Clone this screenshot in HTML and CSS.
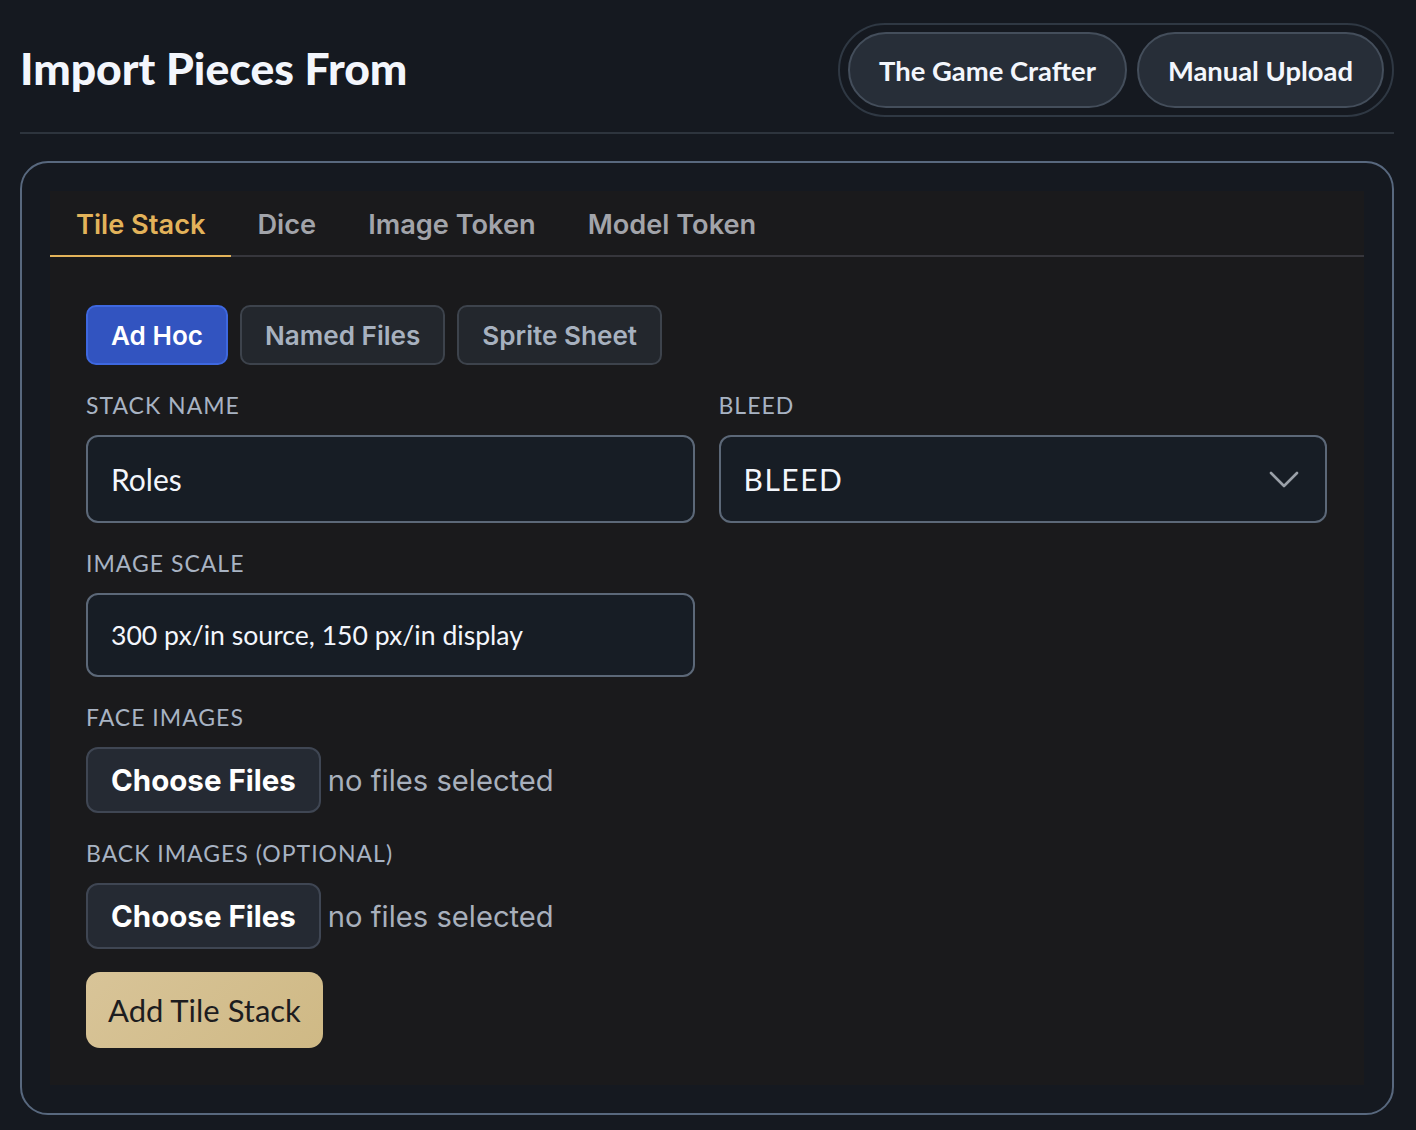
FILE: index.html
```html
<!DOCTYPE html>
<html lang="en">
<head>
<meta charset="utf-8">
<title>Import Pieces From</title>
<link rel="stylesheet" href="styles.css">
</head>
<body>
<div class="page">
  <header class="header">
    <h1 class="title">Import Pieces From</h1>
    <div class="source-group">
      <button class="source-btn">The Game Crafter</button>
      <button class="source-btn">Manual Upload</button>
    </div>
  </header>

  <section class="card">
    <div class="panel">
      <nav class="tabs">
        <span class="tab active">Tile Stack</span>
        <span class="tab">Dice</span>
        <span class="tab">Image Token</span>
        <span class="tab">Model Token</span>
      </nav>
      <div class="content">
        <div class="modes">
          <button class="mode active">Ad Hoc</button>
          <button class="mode">Named Files</button>
          <button class="mode">Sprite Sheet</button>
        </div>
        <div class="form">
          <div class="row">
            <div class="field">
              <label class="label">Stack Name</label>
              <div class="input big">Roles</div>
            </div>
            <div class="field">
              <label class="label">Bleed</label>
              <div class="input big select">
                <span class="select-value">BLEED</span>
                <svg class="chev" width="30" height="18" viewBox="0 0 30 18"><polyline points="2,3 15,16 28,3" fill="none" stroke="#9aa0a8" stroke-width="2.6" stroke-linecap="round" stroke-linejoin="round"/></svg>
              </div>
            </div>
          </div>
          <div class="row">
            <div class="field">
              <label class="label">Image Scale</label>
              <div class="input medium">300 px/in source, 150 px/in display</div>
            </div>
          </div>
          <div class="field">
            <label class="label">Face Images</label>
            <div class="file">
              <button class="file-btn">Choose Files</button>
              <span class="file-status">no files selected</span>
            </div>
          </div>
          <div class="field">
            <label class="label">Back Images (Optional)</label>
            <div class="file">
              <button class="file-btn">Choose Files</button>
              <span class="file-status">no files selected</span>
            </div>
          </div>
          <div class="actions">
            <button class="add-btn">Add Tile Stack</button>
          </div>
        </div>
      </div>
    </div>
  </section>
</div>
</body>
</html>
```

FILE: styles.css
```css
* { box-sizing: border-box; }
html, body { margin: 0; padding: 0; }
body {
  background: #151920;
  color: #f2f5fb;
  font-family: "Lato", "Liberation Sans", sans-serif;
  width: 1416px;
  height: 1130px;
  overflow: hidden;
}
button { font: inherit; cursor: pointer; }

.page {
  padding: 0 22px 0 20px;
}

.header {
  display: flex;
  align-items: center;
  justify-content: space-between;
  padding: 23px 0 15px;
  border-bottom: 2px solid #2d343d;
}
.title {
  margin: 0;
  font-family: "Lato", sans-serif;
  font-weight: 900;
  font-size: 44.5px;
  line-height: 50px;
  margin-top: -4px;
  letter-spacing: 0;
  color: #f3f6fc;
}
.source-group {
  display: flex;
  gap: 10px;
  padding: 7px 8px;
  border: 2px solid #2f3843;
  border-radius: 999px;
}
.source-btn {
  height: 76px;
  padding: 0 29px;
  border-radius: 999px;
  border: 2px solid #444e5b;
  background: #272e38;
  color: #f3f6fc;
  font-family: "Lato", sans-serif;
  font-weight: 700;
  font-size: 27.4px;
}

.card {
  margin-top: 27px;
  border: 2px solid #58687e;
  border-radius: 28px;
  padding: 28px;
  background: #151920;
}
.panel {
  background: #1a1a1c;
}
.tabs {
  display: flex;
  border-bottom: 2px solid #36363c;
  height: 66px;
}
.tab {
  display: flex;
  align-items: center;
  padding: 2px 26px 0;
  font-family: "Inter", sans-serif;
  font-weight: 600;
  font-size: 27.2px;
  color: #a2a4aa;
  margin-bottom: -2px;
  border-bottom: 2px solid transparent;
}
.tab.active {
  color: #e3b35a;
  border-bottom-color: #e3b35a;
}

.content {
  padding: 48px 37px 37px 36px;
}
.modes {
  display: flex;
  gap: 12px;
  margin-bottom: 25px;
}
.mode {
  height: 60px;
  padding: 0 23px;
  border-radius: 10px;
  border: 2px solid #3d434c;
  background: #23272d;
  color: #a7b1bf;
  font-family: "Inter", sans-serif;
  font-weight: 600;
  font-size: 26.1px;
}
.mode.active {
  background: #3254c0;
  border-color: #3e68e0;
  color: #ffffff;
}

.form {
  display: flex;
  flex-direction: column;
  gap: 25px;
}
.row {
  display: grid;
  grid-template-columns: 1fr 1fr;
  gap: 24px;
}
.field {
  display: flex;
  flex-direction: column;
  gap: 15px;
}
.label {
  font-family: "Lato", sans-serif;
  font-size: 23px;
  line-height: 30px;
  letter-spacing: 1px;
  text-transform: uppercase;
  color: #a8b3c3;
}
.input {
  display: flex;
  align-items: center;
  border: 2px solid #5c6878;
  border-radius: 12px;
  background: #171d25;
  color: #f3f6fc;
  padding: 0 23px;
}
.input.big {
  height: 88px;
  font-size: 30px;
}
.input.medium {
  height: 84px;
  font-size: 26.6px;
}
.select {
  justify-content: space-between;
  padding-right: 26px;
}
.select-value {
  letter-spacing: 1.5px;
}

.file {
  display: flex;
  align-items: center;
  gap: 7px;
}
.file-btn {
  height: 66px;
  padding: 0 23px;
  border-radius: 12px;
  border: 2px solid #3f4653;
  background: #252a33;
  color: #ffffff;
  font-family: "Inter", sans-serif;
  font-weight: 700;
  font-size: 29.5px;
}
.file-status {
  font-family: "Inter", sans-serif;
  font-size: 29.2px;
  color: #a8b0bc;
}

.actions {
  margin-top: -2px;
}
.add-btn {
  height: 76px;
  padding: 0 22px;
  border-radius: 14px;
  border: none;
  background: linear-gradient(135deg, #d8c498, #cfb985);
  color: #1d1d1f;
  font-family: "Lato", sans-serif;
  font-size: 31px;
}
```
